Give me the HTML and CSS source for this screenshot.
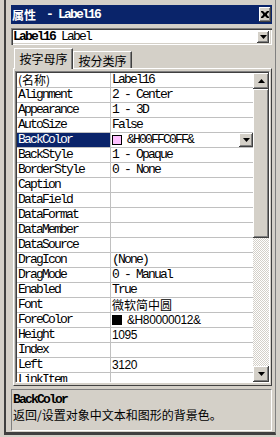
FILE: index.html
```html
<!DOCTYPE html>
<html>
<head>
<meta charset="utf-8">
<link rel="stylesheet" href="styles.css">
</head>
<body>
<div class="window">
  <div class="titlebar">
    <span class="title"><span class="cjk">属性</span><span class="dash">-</span>Label16</span>
    <span class="close"><svg width="8" height="7" viewBox="0 0 8 7"><path d="M0 0h2l2 2 2-2h2v1l-2 2v1l2 2v1h-2l-2-2-2 2h-2v-1l2-2v-1l-2-2z" fill="#000"/></svg></span>
  </div>
  <div class="combo">
    <span class="combo-text"><b>Label16</b> Label</span>
    <span class="btn dd"><svg width="7" height="4" viewBox="0 0 7 4"><path d="M0 0h7l-3.5 4z" fill="#000"/></svg></span>
  </div>
  <div class="tabs">
    <div class="tab active">按字母序</div>
    <div class="tab">按分类序</div>
  </div>
  <div class="panel">
    <div class="grid">
      <div class="rows">
        <div class="row"><div class="name cjkname">(名称)</div><div class="value">Label16</div></div>
        <div class="row"><div class="name">Alignment</div><div class="value">2 - Center</div></div>
        <div class="row"><div class="name">Appearance</div><div class="value">1 - 3D</div></div>
        <div class="row"><div class="name">AutoSize</div><div class="value">False</div></div>
        <div class="row selected"><div class="name">BackColor</div><div class="value"><span class="swatch pink"></span>&amp;H00FFC0FF&amp;<span class="btn cell-btn"><svg width="7" height="4" viewBox="0 0 7 4"><path d="M0 0h7l-3.5 4z" fill="#000"/></svg></span></div></div>
        <div class="row"><div class="name">BackStyle</div><div class="value">1 - Opaque</div></div>
        <div class="row"><div class="name">BorderStyle</div><div class="value">0 - None</div></div>
        <div class="row"><div class="name">Caption</div><div class="value"></div></div>
        <div class="row"><div class="name">DataField</div><div class="value"></div></div>
        <div class="row"><div class="name">DataFormat</div><div class="value"></div></div>
        <div class="row"><div class="name">DataMember</div><div class="value"></div></div>
        <div class="row"><div class="name">DataSource</div><div class="value"></div></div>
        <div class="row"><div class="name">DragIcon</div><div class="value">(None)</div></div>
        <div class="row"><div class="name">DragMode</div><div class="value">0 - Manual</div></div>
        <div class="row"><div class="name">Enabled</div><div class="value">True</div></div>
        <div class="row"><div class="name">Font</div><div class="value cjkval">微软简中圆</div></div>
        <div class="row"><div class="name">ForeColor</div><div class="value"><span class="swatch black"></span><span class="sans">&amp;H80000012&amp;</span></div></div>
        <div class="row"><div class="name">Height</div><div class="value sans">1095</div></div>
        <div class="row"><div class="name">Index</div><div class="value"></div></div>
        <div class="row"><div class="name">Left</div><div class="value sans">3120</div></div>
        <div class="row"><div class="name">LinkItem</div><div class="value"></div></div>
      </div>
      <div class="scrollbar">
        <span class="btn sb-btn"><svg width="7" height="4" viewBox="0 0 7 4"><path d="M3.5 0l3.5 4h-7z" fill="#000"/></svg></span>
        <span class="btn thumb"></span>
        <span class="track"></span>
        <span class="btn sb-btn"><svg width="7" height="4" viewBox="0 0 7 4"><path d="M0 0h7l-3.5 4z" fill="#000"/></svg></span>
      </div>
    </div>
  </div>
  <div class="desc">
    <div class="desc-title">BackColor</div>
    <div class="desc-text">返回/设置对象中文本和图形的背景色。</div>
  </div>
</div>
</body>
</html>
```
FILE: styles.css
```css
html, body {
  margin: 0;
  padding: 0;
  background: #d4d0c8;
}
body {
  width: 280px;
  height: 437px;
  overflow: hidden;
  font-family: "Liberation Mono", monospace;
  font-size: 13px;
}
.window {
  box-sizing: border-box;
  margin-left: 4px;
  width: 272px;
  height: 435px;
  padding: 5px 3px 0 5px;
  border-left: 2px solid #404040;
  border-right: 1px solid #808080;
  border-bottom: 3px solid #404040;
  display: flex;
  flex-direction: column;
}
.cjk, .tab, .cjkname, .cjkval, .desc-text {
  font-family: "Noto Sans CJK SC", sans-serif;
}
.titlebar {
  height: 19px;
  background: #0a246a;
  display: flex;
  align-items: center;
  justify-content: space-between;
  padding: 0 1px 0 1px;
}
.title {
  color: #fff;
  font-weight: bold;
  font-size: 13px;
  letter-spacing: -1.8px;
  display: flex;
  align-items: center;
}
.title .cjk {
  letter-spacing: 0;
  font-size: 12px;
}
.dash {
  margin: 0 6px 0 10px;
}
.close {
  width: 12px;
  height: 15px;
  background: #d4d0c8;
  box-shadow: inset -1px -1px #404040, inset 1px 1px #fff, inset -2px -2px #808080;
  display: flex;
  align-items: center;
  justify-content: center;
}
.btn {
  background: #d4d0c8;
  box-shadow: inset -1px -1px #404040, inset 1px 1px #fff, inset -2px -2px #808080, inset 2px 2px #d4d0c8;
  display: flex;
  align-items: center;
  justify-content: center;
  box-sizing: border-box;
}
.combo {
  margin-top: 4px;
  height: 17px;
  background: #fff;
  box-shadow: inset 1px 1px #808080, inset 2px 2px #404040, inset -1px -1px #fff, inset -2px -2px #d4d0c8;
  display: flex;
  align-items: center;
  padding: 0 2px 0 2px;
}
.combo-text {
  flex: 1;
  letter-spacing: -1.8px;
  font-size: 13px;
}
.dd {
  width: 12px;
  height: 12px;
  margin-right: 1px;
}
.tabs {
  margin-top: 3px;
  height: 20px;
  display: flex;
  align-items: flex-end;
  padding-left: 3px;
}
.tab {
  font-size: 12px;
  height: 17px;
  width: 59px;
  box-sizing: border-box;
  display: flex;
  align-items: center;
  justify-content: center;
  white-space: nowrap;
  border-top: 1px solid #fff;
  border-left: 1px solid #fff;
  border-right: 1px solid #404040;
  box-shadow: inset -1px 0 #808080;
  color: #000;
}
.tab.active {
  height: 21px;
  margin-bottom: -1px;
  position: relative;
  z-index: 1;
  background: #d4d0c8;
  padding-bottom: 1px;
}
.panel {
  margin: 0 0 0 2px;
  border-top: 1px solid #fff;
  border-left: 1px solid #fff;
  border-right: 1px solid #404040;
  border-bottom: 1px solid #404040;
  padding: 2px 1px 2px 1px;
}
.grid {
  height: 312px;
  box-sizing: border-box;
  border-top: 1px solid #808080;
  border-left: 1px solid #808080;
  border-right: 1px solid #fff;
  border-bottom: 1px solid #fff;
  box-shadow: inset 1px 1px #404040;
  padding: 1px 0 0 1px;
  display: flex;
  overflow: hidden;
  background: #fff;
}
.rows {
  flex: 1;
  overflow: hidden;
  background: #fff;
}
.row {
  display: flex;
  height: 14px;
  border-bottom: 1px solid #c0c0c0;
  line-height: 14px;
  letter-spacing: -1.8px;
}
.name {
  width: 92px;
  padding-left: 1px;
  border-right: 1px solid #c0c0c0;
  white-space: nowrap;
}
.cjkname {
  letter-spacing: 0;
  font-size: 12px;
  line-height: 14px;
}
.value {
  flex: 1;
  display: flex;
  align-items: center;
  padding-left: 1px;
  white-space: nowrap;
}
.selected .name {
  background: #0a246a;
  color: #fff;
}
.swatch {
  width: 8px;
  height: 8px;
  border: 1px solid #000;
  margin-right: 5px;
  flex: none;
}
.pink { background: #ffc0ff; }
.black { background: #000; }
.cell-btn {
  margin-left: auto;
  width: 14px;
  height: 14px;
}
.sans {
  font-family: "Liberation Sans", sans-serif;
  font-size: 12px;
  letter-spacing: -0.4px;
}
.cjkval {
  letter-spacing: 0;
  font-size: 12px;
}
.scrollbar {
  width: 16px;
  display: flex;
  flex-direction: column;
}
.sb-btn {
  height: 16px;
  flex: none;
}
.thumb {
  height: 149px;
  flex: none;
}
.track {
  flex: 1;
  background: repeating-conic-gradient(#d4d0c8 0 25%, #ffffff 0 50%) 0 0 / 2px 2px;
}
.desc {
  margin-top: 3px;
  height: 42px;
  box-sizing: border-box;
  border-top: 1px solid #808080;
  border-left: 1px solid #808080;
  border-right: 1px solid #fff;
  border-bottom: 1px solid #fff;
  padding: 3px 1px 0 1px;
}
.desc-title {
  font-weight: bold;
  letter-spacing: -1.8px;
  height: 14px;
  line-height: 14px;
}
.desc-text {
  font-size: 12px;
  line-height: 15px;
}
```
